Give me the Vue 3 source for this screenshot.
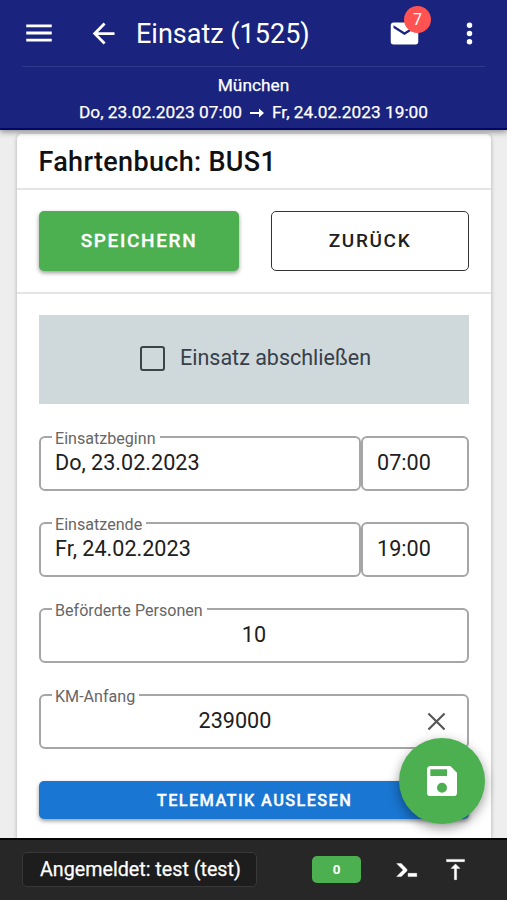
<script setup>
import { ref } from 'vue'

const done = ref(false)
const unread = ref(7)

const periods = [
  { label: 'Einsatzbeginn', date: 'Do, 23.02.2023', time: '07:00' },
  { label: 'Einsatzende', date: 'Fr, 24.02.2023', time: '19:00' }
]

const persons = ref('10')
const kmStart = ref('239000')
</script>

<template>
  <div class="app">
    <header class="header">
      <div class="header__bar">
        <svg class="header__menu" viewBox="0 0 24 24"><path d="M3,6H21V8H3V6M3,11H21V13H3V11M3,16H21V18H3V16Z" /></svg>
        <svg class="header__back" viewBox="0 0 24 24"><path d="M20,11V13H8L13.5,18.5L12.08,19.92L4.16,12L12.08,4.08L13.5,5.5L8,11H20Z" /></svg>
        <h1 class="header__title">Einsatz (1525)</h1>
        <div class="header__mail">
          <svg viewBox="0 0 24 24"><path d="M20,8L12,13L4,8V6L12,11L20,6M20,4H4C2.89,4 2,4.89 2,6V18A2,2 0 0,0 4,20H20A2,2 0 0,0 22,18V6C22,4.89 21.1,4 20,4Z" /></svg>
          <span class="header__badge">{{ unread }}</span>
        </div>
        <svg class="header__more" viewBox="0 0 24 24"><path d="M12,16A2,2 0 0,1 14,18A2,2 0 0,1 12,20A2,2 0 0,1 10,18A2,2 0 0,1 12,16M12,10A2,2 0 0,1 14,12A2,2 0 0,1 12,14A2,2 0 0,1 10,12A2,2 0 0,1 12,10M12,4A2,2 0 0,1 14,6A2,2 0 0,1 12,8A2,2 0 0,1 10,6A2,2 0 0,1 12,4Z" /></svg>
      </div>
      <div class="header__info">
        <div>München</div>
        <div class="header__range">
          <span>Do, 23.02.2023 07:00</span>
          <svg viewBox="0 0 14 12"><path d="M0 5h9V1.6L14 6 9 10.4V7H0z" /></svg>
          <span>Fr, 24.02.2023 19:00</span>
        </div>
      </div>
    </header>

    <main class="card">
      <h2 class="card__title">Fahrtenbuch: BUS1</h2>

      <div class="card__actions">
        <button class="btn btn--save" type="button">Speichern</button>
        <button class="btn btn--back" type="button">Zurück</button>
      </div>

      <div class="form">
        <label class="finish">
          <input v-model="done" class="finish__input" type="checkbox">
          <span>Einsatz abschließen</span>
        </label>

        <div v-for="period in periods" :key="period.label" class="form__row">
          <fieldset class="field field--date">
            <legend><span>{{ period.label }}</span></legend>
            <div class="field__value">{{ period.date }}</div>
          </fieldset>
          <div class="field field--time">
            <div class="field__value">{{ period.time }}</div>
          </div>
        </div>

        <div class="form__row">
          <fieldset class="field field--center">
            <legend><span>Beförderte Personen</span></legend>
            <div class="field__value">{{ persons }}</div>
          </fieldset>
        </div>

        <div class="form__row">
          <fieldset class="field field--center">
            <legend><span>KM-Anfang</span></legend>
            <div class="field__value">
              <span class="field__text">{{ kmStart }}</span>
              <svg class="field__clear" viewBox="0 0 20 20"><path d="M1.5 1.5l17 17M18.5 1.5l-17 17" /></svg>
            </div>
          </fieldset>
        </div>

        <button class="btn btn--read" type="button">Telematik auslesen</button>
      </div>
    </main>

    <button class="fab" type="button" aria-label="Speichern">
      <svg viewBox="0 0 24 24"><path d="M15,9H5V5H15M12,19A3,3 0 0,1 9,16A3,3 0 0,1 12,13A3,3 0 0,1 15,16A3,3 0 0,1 12,19M17,3H5C3.89,3 3,3.9 3,5V19A2,2 0 0,0 5,21H19A2,2 0 0,0 21,19V7L17,3Z" /></svg>
    </button>

    <footer class="footer">
      <div class="footer__user">Angemeldet: test (test)</div>
      <div class="footer__count">0</div>
      <svg class="footer__console" viewBox="0 0 24 24"><path d="M13,19V16H21V19H13M8.5,13L2.47,7H6.71L11.67,11.95C12.25,12.54 12.25,13.5 11.67,14.07L6.74,19H2.5L8.5,13Z" /></svg>
      <svg class="footer__top" viewBox="0 0 24 24"><path d="M8,11H11V21H13V11H16L12,7L8,11M4,3V5H20V3H4Z" /></svg>
    </footer>
  </div>
</template>

<style>
body {
  margin: 0;
}
</style>

<style scoped>
.app {
  position: relative;
  display: flex;
  flex-direction: column;
  width: 507px;
  height: 900px;
  overflow: hidden;
  background: #eee;
  color: #202020;
  font-family: Roboto, "Liberation Sans", sans-serif;
}

.app *,
.app *::before {
  box-sizing: border-box;
}

.app svg {
  display: block;
  flex: none;
  fill: currentColor;
}

.header {
  position: relative;
  z-index: 2;
  flex: none;
  height: 130px;
  padding: 0 22px;
  background: #1a237e;
  border-bottom: 2px solid #050565;
  box-shadow: 0 2px 6px rgba(0, 0, 0, 0.42);
  color: #fff;
}

.header__bar {
  display: flex;
  align-items: center;
  height: 67px;
  border-bottom: 1px solid #303a8c;
}

.header__menu {
  width: 34px;
  height: 34px;
}

.header__back {
  width: 33px;
  height: 33px;
  margin-left: 31px;
}

.header__title {
  flex: 1;
  margin: 1px 0 0 16px;
  font-size: 27px;
  font-weight: 400;
  line-height: 34px;
}

.header__mail {
  position: relative;
  margin-right: 32px;
}

.header__mail svg,
.header__more {
  width: 33px;
  height: 33px;
}

.header__more {
  margin-right: -1px;
}

.header__badge {
  position: absolute;
  top: -11px;
  left: 16px;
  width: 27px;
  height: 27px;
  border-radius: 50%;
  background: #ff5252;
  font-size: 16px;
  line-height: 27px;
  text-align: center;
}

.header__info {
  padding-top: 5px;
  font-size: 17.3px;
  line-height: 27px;
  text-align: center;
  -webkit-text-stroke: 0.25px currentColor;
}

.header__range {
  display: flex;
  align-items: center;
  justify-content: center;
  gap: 8px;
}

.header__range svg {
  width: 14px;
  height: 12px;
}

.card {
  flex: 1;
  min-height: 0;
  margin: 4px 16px 0 17px;
  border-radius: 5px 5px 0 0;
  background: #fff;
  box-shadow: 0 1px 4px rgba(0, 0, 0, 0.28);
}

.card__title {
  height: 56px;
  margin: 0;
  padding-left: 21.5px;
  border-bottom: 2px solid #e4e4e4;
  color: #111;
  font-size: 27px;
  font-weight: 500;
  letter-spacing: 0.32px;
  line-height: 56px;
}

.card__actions {
  display: flex;
  gap: 32px;
  height: 104px;
  padding: 21px 22px 0;
  border-bottom: 2px solid #e4e4e4;
}

.btn {
  padding: 0;
  border: 0;
  border-radius: 5px;
  font-family: inherit;
  font-weight: 500;
  text-transform: uppercase;
}

.card__actions .btn {
  flex: 1;
  height: 60px;
  padding: 0 0 1px;
  font-size: 19px;
  letter-spacing: 1.65px;
}

.card__actions .btn--save {
  flex: 0 0 200px;
  background: #4caf50;
  box-shadow: 0 2px 4px rgba(0, 0, 0, 0.4);
  color: #fff;
  -webkit-text-stroke: 0.3px currentColor;
}

.card__actions .btn--back {
  border: 1.5px solid #333;
  background: #fff;
  color: #202020;
}

.form {
  padding: 21px 22px 0;
}

.finish {
  display: flex;
  align-items: center;
  justify-content: center;
  height: 89px;
  padding-bottom: 4px;
  background: #cfd8da;
  color: #37404a;
  font-size: 21.5px;
}

.finish__input {
  width: 25px;
  height: 25px;
  margin: 1px 15px 0 3px;
  border: 2.5px solid #3b4449;
  border-radius: 3px;
  appearance: none;
}

.form__row {
  display: flex;
  align-items: flex-end;
  height: 86.2px;
}

.form__row:nth-child(2) {
  height: 86.6px;
}

.field {
  flex: 1;
  min-width: 0;
  height: 64px;
  margin: 0;
  padding: 0 14px;
  border: 2px solid #a6a6a6;
  border-radius: 6px;
}

.field legend {
  margin-left: -3px;
  padding: 0 4px 0 3px;
  color: #666;
  font-size: 16.1px;
  line-height: 20px;
}

.field legend span {
  position: relative;
  top: 2px;
}

.field__value {
  position: relative;
  font-size: 21.6px;
  line-height: 32px;
}

.field--time {
  flex: none;
  width: 108px;
  height: 55px;
  padding-top: 9px;
}

.field--center .field__value {
  text-align: center;
}

.field__text {
  margin-right: 38px;
}

.field__clear {
  position: absolute;
  top: 7px;
  right: 7px;
  width: 19px;
  height: 19px;
  stroke: #555;
  stroke-width: 2.2;
}

.btn--read {
  display: block;
  width: 100%;
  height: 38px;
  margin-top: 31.4px;
  padding: 1px 0 0 1px;
  background: #1976d2;
  box-shadow: 0 2px 4px rgba(0, 0, 0, 0.4);
  color: #fff;
  font-size: 16.4px;
  letter-spacing: 1.35px;
  -webkit-text-stroke: 0.3px currentColor;
}

.fab {
  position: absolute;
  z-index: 3;
  right: 22px;
  bottom: 76px;
  display: flex;
  align-items: center;
  justify-content: center;
  width: 86px;
  height: 86px;
  padding: 0;
  border: 0;
  border-radius: 50%;
  background: #4caf50;
  box-shadow: 0 4px 12px rgba(0, 0, 0, 0.4);
  color: #fff;
}

.fab svg {
  width: 40px;
  height: 40px;
}

.footer {
  position: relative;
  z-index: 2;
  display: flex;
  flex: none;
  align-items: center;
  height: 62px;
  padding: 0 38px 2px 22px;
  border-top: 2px solid #050505;
  background: #272727;
  color: #fff;
}

.footer__user {
  width: 235px;
  height: 35px;
  padding-left: 17px;
  border: 1px solid #383838;
  border-radius: 5px;
  background: #1d1d1d;
  font-size: 19.7px;
  line-height: 33px;
  white-space: nowrap;
  -webkit-text-stroke: 0.25px currentColor;
}

.footer__count {
  width: 49px;
  height: 27px;
  margin-left: 55px;
  border-radius: 5px;
  background: #4caf50;
  font-size: 13.5px;
  font-weight: 700;
  line-height: 27px;
  text-align: center;
}

.footer__console {
  width: 26px;
  height: 26px;
  margin-left: 33px;
  stroke: currentColor;
  stroke-width: 0.4;
}

.footer__top {
  width: 27px;
  height: 27px;
  margin-left: auto;
  stroke: currentColor;
  stroke-width: 0.4;
}
</style>
